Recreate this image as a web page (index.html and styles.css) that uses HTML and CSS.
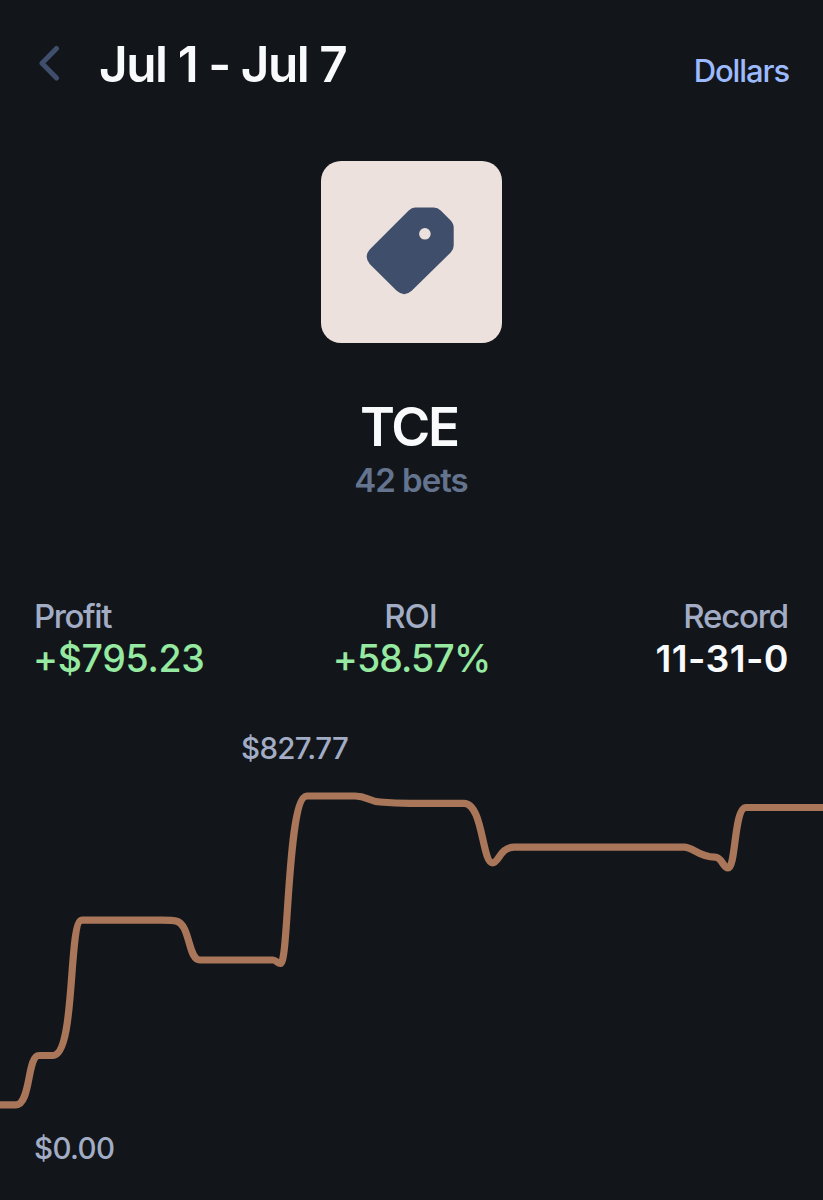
FILE: index.html
```html
<!DOCTYPE html>
<html lang="en">
<head>
<meta charset="utf-8">
<title>TCE</title>
<link rel="stylesheet" href="styles.css">
</head>
<body>
<main class="screen">
  <header class="header">
    <svg class="back" viewBox="0 0 24 36" aria-label="Back"><path d="M19.500 3.500 5 18.300 19.500 33"/></svg>
    <h1 class="title">Jul 1 - Jul 7</h1>
    <a class="unit">Dollars</a>
  </header>
  <section class="hero">
    <div class="tile">
      <svg class="tag" viewBox="1.8 1 88 88"><path fill-rule="evenodd" d="M49 .5H67.500Q71.500.5 74.500 3.500L84 13Q87.500 16.500 87.500 20.500V38.500Q87.500 42.500 84.500 45.500L45.500 83.800Q38 90.500 30.500 83.800L3.500 57Q-2.500 49.500 3.500 42.500L42.500 3.500Q45.500.5 49 .5ZM58.700 21a5.800 5.800 0 1 0 0 11.600a5.800 5.800 0 1 0 0-11.600Z"/></svg>
    </div>
    <h2 class="name">TCE</h2>
    <p class="bets">42 bets</p>
  </section>
  <section class="stats">
    <div class="stat"><div class="label profit-label">Profit</div><div class="value gain profit">+$795.23</div></div>
    <div class="stat center"><div class="label roi-label">ROI</div><div class="value gain roi">+58.57%</div></div>
    <div class="stat end"><div class="label record-label">Record</div><div class="value record">11-31-0</div></div>
  </section>
  <section class="chart">
    <div class="mark high">$827.77</div>
    <svg class="line" viewBox="0 766 823 364"><path d="M-5 1104.800H16C31 1104.800 27 1055.500 39 1055.500H53C76 1055.500 68 920.200 82 920.200H160C176 920.200 180 920 184.500 929C190.500 942 191 960 200 960H273C276 960 277.500 963.500 280.500 963.500C289 963.500 287 796 307 796H355C367 796 369 801.500 380 802C392 803 400 803.300 410 803.300H464C483 803.300 482 862.800 492.500 862.800C499 862.800 500 847.200 514 847.200H684C694 847.200 698 857.200 715 857.200C722 857.200 723 868 728 868C736 868 734 807.500 746 807.500H830"/></svg>
    <div class="mark low">$0.00</div>
  </section>
</main>
</body>
</html>
```
FILE: styles.css
```css
* { box-sizing: border-box; margin: 0; padding: 0; }
body { background: #12161a; font-family: Inter, sans-serif; color: #f9fafc; }
.screen { width: 823px; height: 1200px; padding-top: 34px; overflow: hidden; background: #12161a; }
.header { display: flex; align-items: baseline; height: 60px; padding: 0 34px 0 37px; }
.back { width: 24px; height: 36px; align-self: flex-start; margin-top: 11px; fill: none; stroke: #3e4e6c; stroke-width: 5; stroke-linecap: round; stroke-linejoin: round; }
.title { margin-left: 38px; font-size: 49.5px; font-weight: 600; line-height: 60px; letter-spacing: -1.45px; white-space: pre; }
.unit { margin-left: auto; font-size: 31px; font-weight: 500; line-height: 40px; letter-spacing: -1.1px; color: #9dbaff; }
.hero { display: flex; flex-direction: column; align-items: center; padding-top: 67px; }
.tile { display: grid; place-items: center; width: 181px; height: 182px; border-radius: 20px; background: #ece1dc; }
.tag { width: 88px; height: 88px; overflow: visible; fill: #3f4e6b; }
.name { margin-top: 52px; padding-right: 5px; font-size: 53px; font-weight: 600; line-height: 64px; letter-spacing: -2.1px; }
.bets { margin-top: 1px; padding-right: 1px; font-size: 33px; font-weight: 600; line-height: 40px; letter-spacing: -1px; color: #64748f; }
.stats { display: grid; grid-template-columns: 1fr 1fr 1fr; margin-top: 97px; padding: 0 34px; }
.center { text-align: center; }
.end { text-align: right; }
.label { font-size: 33px; font-weight: 500; line-height: 38px; letter-spacing: -1.2px; color: #a2adc5; }
.profit-label { letter-spacing: -1.4px; }
.roi-label { padding-right: 2px; letter-spacing: -1px; }
.record-label { padding-right: 1px; }
.value { font-size: 37.5px; font-weight: 500; line-height: 48px; letter-spacing: -0.6px; }
.profit { margin-left: -1px; letter-spacing: -0.35px; }
.roi { letter-spacing: -0.9px; }
.record { font-weight: 600; letter-spacing: 0.4px; }
.gain { color: #96e9a0; }
.chart { display: flex; flex-direction: column; padding-top: 47px; }
.mark { font-size: 29.5px; font-weight: 500; line-height: 36px; letter-spacing: -0.65px; color: #a2adc5; }
.high { padding-left: 241px; }
.low { padding-left: 34px; }
.line { display: block; width: 823px; height: 364px; fill: none; stroke: #a9765a; stroke-width: 7.2; stroke-linecap: round; stroke-linejoin: round; }
```
